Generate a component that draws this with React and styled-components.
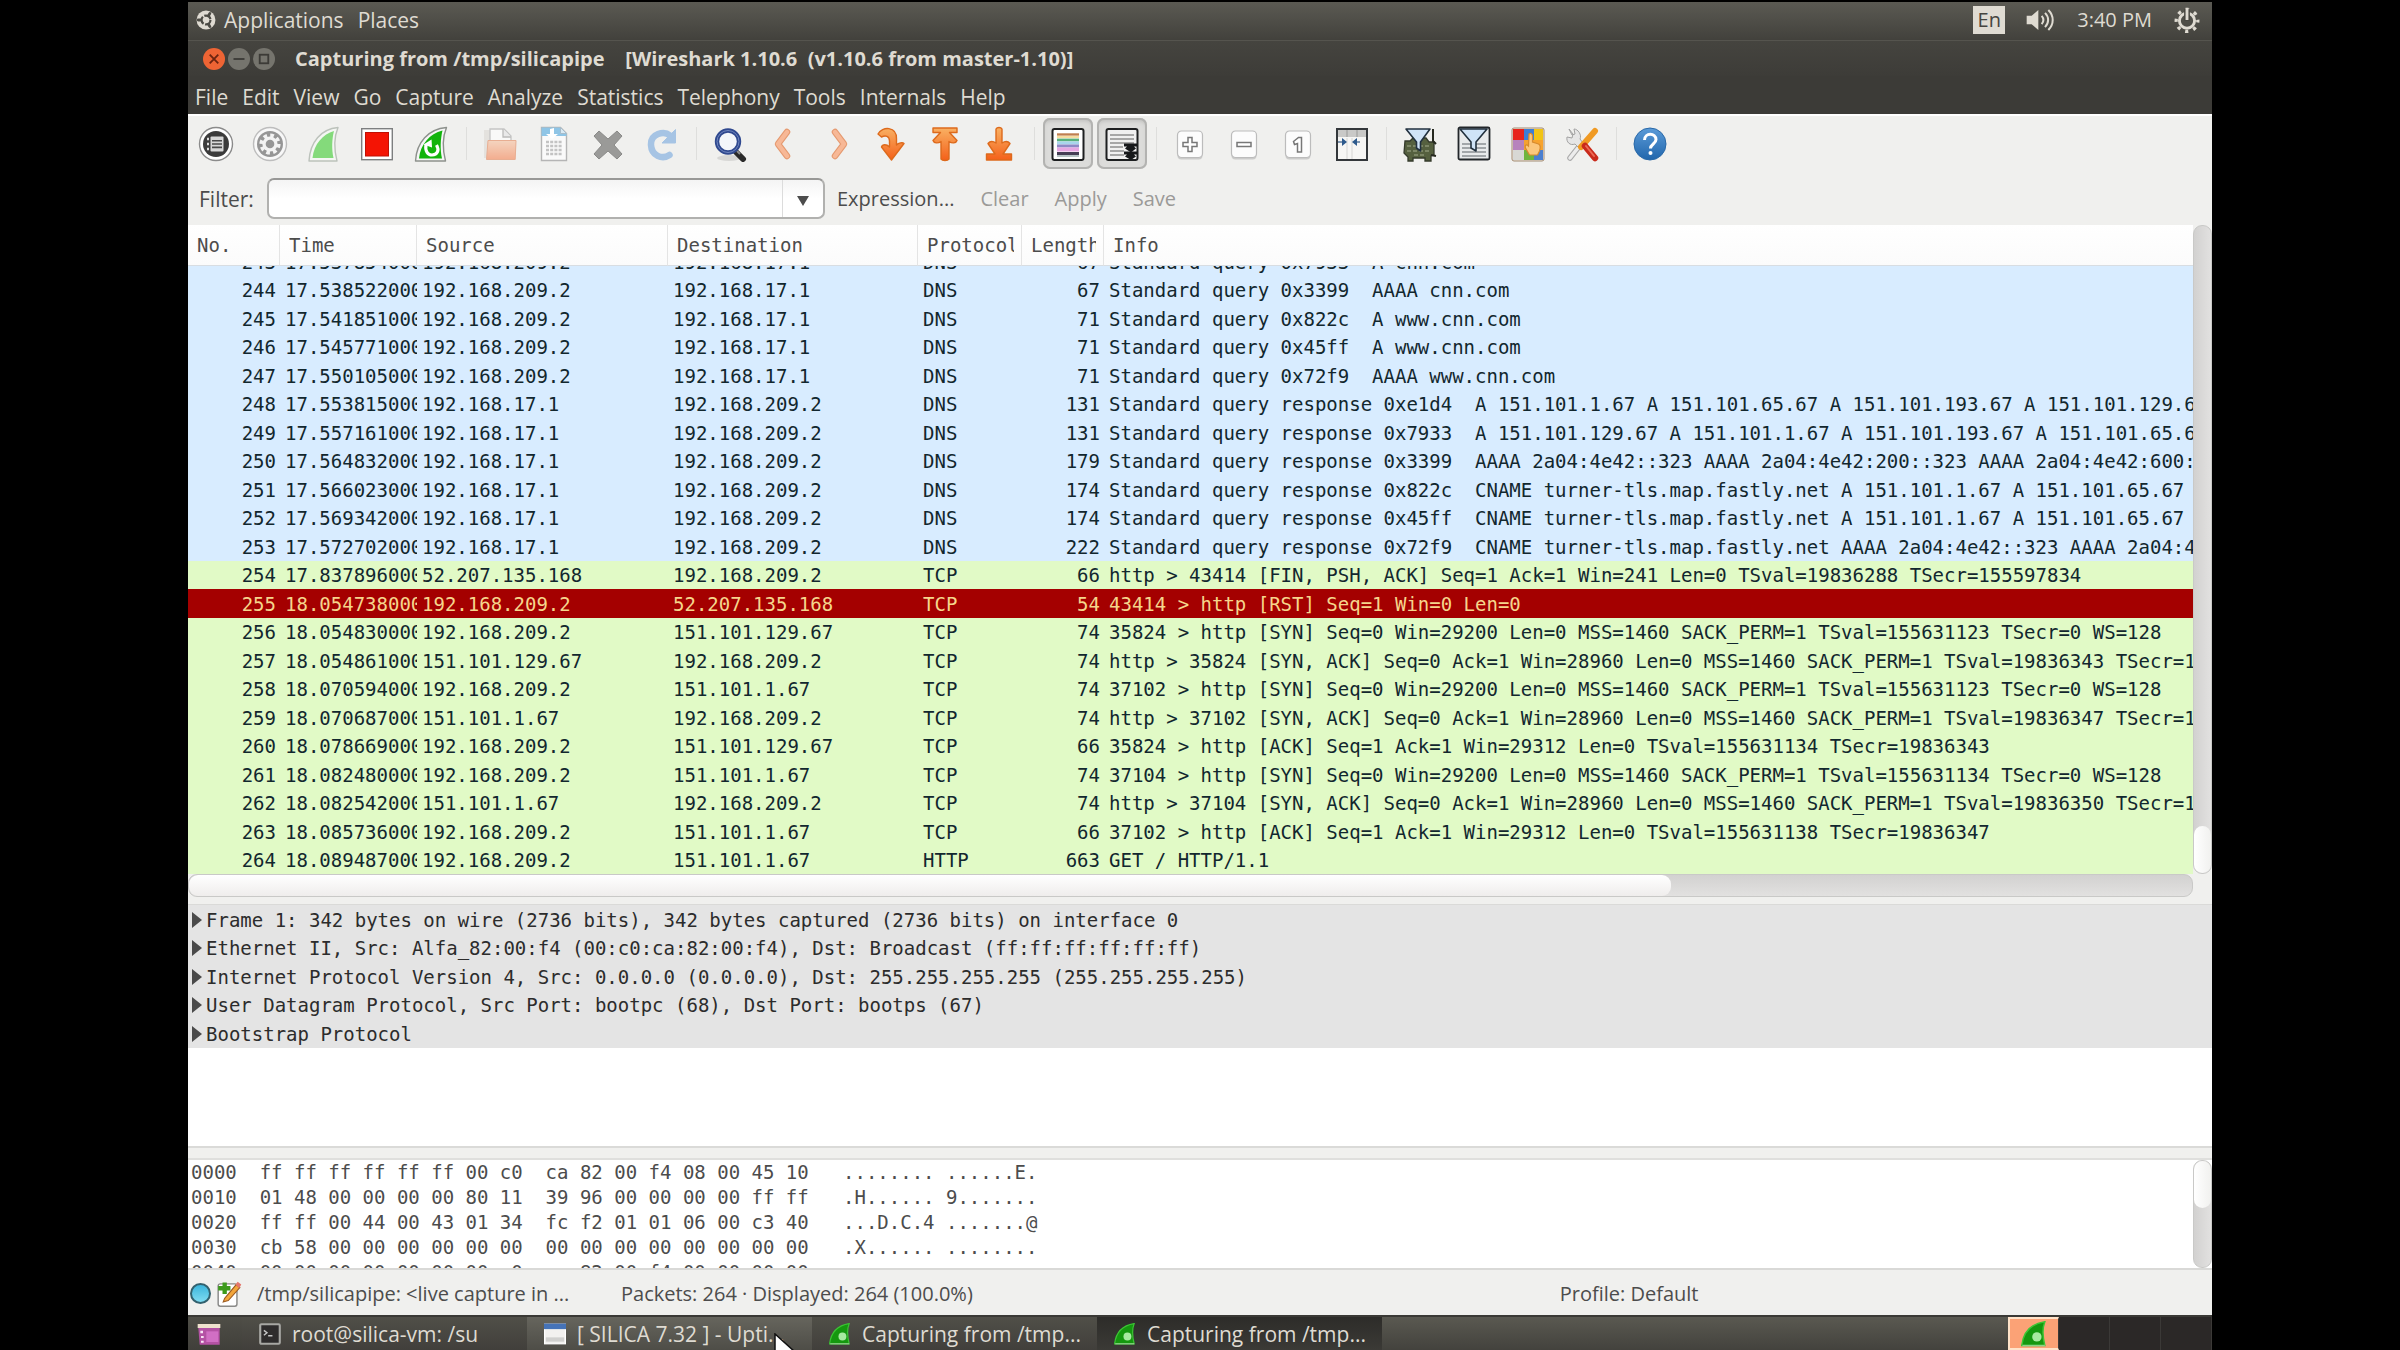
import React from "react";
import styled, { createGlobalStyle } from "styled-components";

const packets = [
  [243, "17.537854000", "192.168.209.2", "192.168.17.1", "DNS", 67, "Standard query 0x7933  A cnn.com"],
  [244, "17.538522000", "192.168.209.2", "192.168.17.1", "DNS", 67, "Standard query 0x3399  AAAA cnn.com"],
  [245, "17.541851000", "192.168.209.2", "192.168.17.1", "DNS", 71, "Standard query 0x822c  A www.cnn.com"],
  [246, "17.545771000", "192.168.209.2", "192.168.17.1", "DNS", 71, "Standard query 0x45ff  A www.cnn.com"],
  [247, "17.550105000", "192.168.209.2", "192.168.17.1", "DNS", 71, "Standard query 0x72f9  AAAA www.cnn.com"],
  [248, "17.553815000", "192.168.17.1", "192.168.209.2", "DNS", 131, "Standard query response 0xe1d4  A 151.101.1.67 A 151.101.65.67 A 151.101.193.67 A 151.101.129.67"],
  [249, "17.557161000", "192.168.17.1", "192.168.209.2", "DNS", 131, "Standard query response 0x7933  A 151.101.129.67 A 151.101.1.67 A 151.101.193.67 A 151.101.65.67"],
  [250, "17.564832000", "192.168.17.1", "192.168.209.2", "DNS", 179, "Standard query response 0x3399  AAAA 2a04:4e42::323 AAAA 2a04:4e42:200::323 AAAA 2a04:4e42:600::323"],
  [251, "17.566023000", "192.168.17.1", "192.168.209.2", "DNS", 174, "Standard query response 0x822c  CNAME turner-tls.map.fastly.net A 151.101.1.67 A 151.101.65.67 A 151.101.129.67"],
  [252, "17.569342000", "192.168.17.1", "192.168.209.2", "DNS", 174, "Standard query response 0x45ff  CNAME turner-tls.map.fastly.net A 151.101.1.67 A 151.101.65.67 A 151.101.129.67"],
  [253, "17.572702000", "192.168.17.1", "192.168.209.2", "DNS", 222, "Standard query response 0x72f9  CNAME turner-tls.map.fastly.net AAAA 2a04:4e42::323 AAAA 2a04:4e42:200::323"],
  [254, "17.837896000", "52.207.135.168", "192.168.209.2", "TCP", 66, "http > 43414 [FIN, PSH, ACK] Seq=1 Ack=1 Win=241 Len=0 TSval=19836288 TSecr=155597834"],
  [255, "18.054738000", "192.168.209.2", "52.207.135.168", "TCP", 54, "43414 > http [RST] Seq=1 Win=0 Len=0", "reset"],
  [256, "18.054830000", "192.168.209.2", "151.101.129.67", "TCP", 74, "35824 > http [SYN] Seq=0 Win=29200 Len=0 MSS=1460 SACK_PERM=1 TSval=155631123 TSecr=0 WS=128"],
  [257, "18.054861000", "151.101.129.67", "192.168.209.2", "TCP", 74, "http > 35824 [SYN, ACK] Seq=0 Ack=1 Win=28960 Len=0 MSS=1460 SACK_PERM=1 TSval=19836343 TSecr=155631123"],
  [258, "18.070594000", "192.168.209.2", "151.101.1.67", "TCP", 74, "37102 > http [SYN] Seq=0 Win=29200 Len=0 MSS=1460 SACK_PERM=1 TSval=155631123 TSecr=0 WS=128"],
  [259, "18.070687000", "151.101.1.67", "192.168.209.2", "TCP", 74, "http > 37102 [SYN, ACK] Seq=0 Ack=1 Win=28960 Len=0 MSS=1460 SACK_PERM=1 TSval=19836347 TSecr=155631123"],
  [260, "18.078669000", "192.168.209.2", "151.101.129.67", "TCP", 66, "35824 > http [ACK] Seq=1 Ack=1 Win=29312 Len=0 TSval=155631134 TSecr=19836343"],
  [261, "18.082480000", "192.168.209.2", "151.101.1.67", "TCP", 74, "37104 > http [SYN] Seq=0 Win=29200 Len=0 MSS=1460 SACK_PERM=1 TSval=155631134 TSecr=0 WS=128"],
  [262, "18.082542000", "151.101.1.67", "192.168.209.2", "TCP", 74, "http > 37104 [SYN, ACK] Seq=0 Ack=1 Win=28960 Len=0 MSS=1460 SACK_PERM=1 TSval=19836350 TSecr=155631134"],
  [263, "18.085736000", "192.168.209.2", "151.101.1.67", "TCP", 66, "37102 > http [ACK] Seq=1 Ack=1 Win=29312 Len=0 TSval=155631138 TSecr=19836347"],
  [264, "18.089487000", "192.168.209.2", "151.101.1.67", "HTTP", 663, "GET / HTTP/1.1"],
];

const details = [
  "Frame 1: 342 bytes on wire (2736 bits), 342 bytes captured (2736 bits) on interface 0",
  "Ethernet II, Src: Alfa_82:00:f4 (00:c0:ca:82:00:f4), Dst: Broadcast (ff:ff:ff:ff:ff:ff)",
  "Internet Protocol Version 4, Src: 0.0.0.0 (0.0.0.0), Dst: 255.255.255.255 (255.255.255.255)",
  "User Datagram Protocol, Src Port: bootpc (68), Dst Port: bootps (67)",
  "Bootstrap Protocol",
];

const hexDump = [
  "0000  ff ff ff ff ff ff 00 c0  ca 82 00 f4 08 00 45 10   ........ ......E.",
  "0010  01 48 00 00 00 00 80 11  39 96 00 00 00 00 ff ff   .H...... 9.......",
  "0020  ff ff 00 44 00 43 01 34  fc f2 01 01 06 00 c3 40   ...D.C.4 .......@",
  "0030  cb 58 00 00 00 00 00 00  00 00 00 00 00 00 00 00   .X...... ........",
  "0040  00 00 00 00 00 00 00 c0  ca 82 00 f4 00 00 00 00   ........ ........",
].join("\n");

const menus = ["File", "Edit", "View", "Go", "Capture", "Analyze", "Statistics", "Telephony", "Tools", "Internals", "Help"];

const rowColors = {
  DNS: "#d8ecff",
  TCP: "#e1fac6",
  HTTP: "#e1fac6",
};

/* ---------- icons ---------- */

const Svg = ({ size = 36, children, ...rest }) => (
  <svg width={size} height={size} viewBox="0 0 36 36" fill="none" aria-hidden="true" {...rest}>
    {children}
  </svg>
);

const InterfacesIcon = () => (
  <Svg>
    <circle cx="18" cy="18" r="16.5" fill="#fff" stroke="#8b8b8b" strokeWidth="1.4" />
    <circle cx="18" cy="18" r="13" fill="#3b3b3b" />
    <path d="M9 13h2M9 18h2M9 23h2" stroke="#ddd" strokeWidth="2.4" />
    <rect x="12.5" y="10.5" width="13" height="15" rx="1" fill="#d8d8d8" />
    <path d="M14 14.8h10M14 18h10M14 21.4h10" stroke="#4a4a4a" strokeWidth="1.6" />
  </Svg>
);

const OptionsIcon = () => (
  <Svg>
    <circle cx="18" cy="18" r="16.5" fill="#f8f8f8" stroke="#bdbdbd" strokeWidth="1.4" />
    <circle cx="18" cy="18" r="13" fill="#969696" />
    <circle cx="18" cy="18" r="8.6" stroke="#f3f3f3" strokeWidth="4" strokeDasharray="3.6 3.15" />
    <circle cx="18" cy="18" r="7.6" fill="#f3f3f3" />
    <circle cx="18" cy="18" r="4.3" fill="#969696" />
  </Svg>
);

const FinIcon = () => (
  <Svg>
    <path d="M3 35C4 16 15 3 32 1.5C28 11 28 23 31 35Z" fill="#f4f6f3" stroke="#bcc2bb" strokeWidth="1.4" strokeLinejoin="round" />
    <path d="M6.5 32C8 18 17 8 28 5C26 13 25.500 23 27.500 32Z" fill="#84da7b" />
  </Svg>
);

const StopIcon = () => (
  <Svg>
    <rect x="1.700" y="2.700" width="30.600" height="31" fill="#fff" stroke="#7d7f80" strokeWidth="1.4" />
    <rect x="5.500" y="6.500" width="23" height="23.500" fill="#f41404" stroke="#c01004" />
  </Svg>
);

const RestartIcon = () => (
  <Svg>
    <path d="M1.500 35C2.500 16 14.500 3 32.500 1.500C28.500 11 28.500 23 31.500 35Z" fill="#f6f6f6" stroke="#8d918c" strokeWidth="1.4" strokeLinejoin="round" />
    <path d="M5 32.500C6.500 18 15.500 8 28.500 4.500C26.500 13 26 23 28 32.500Z" fill="#12b40c" />
    <path d="M12 18.500c-1.200 7 2 10.500 6 10.500c5.500 0 7.500-5 4.500-10" stroke="#fff" strokeWidth="3.200" />
    <path d="M9.500 18.500l8-5l.5 8z" fill="#fff" />
  </Svg>
);

const OpenIcon = () => (
  <Svg opacity="0.6">
    <path d="M2 4h8v28H2z" fill="#ddd9d5" />
    <path d="M8 3h14l7 7v12H8z" fill="#fff" stroke="#aaa" strokeWidth="1.3" />
    <path d="M21 3v8h8" fill="#e6e6e6" stroke="#999" strokeWidth="1.3" />
    <path d="M6 14.500h28l-.8 19H4.500z" fill="url(#folder)" stroke="#e38356" />
    <defs>
      <linearGradient id="folder" x1="0" y1="0" x2="0" y2="1">
        <stop offset="0" stopColor="#f8c3a1" />
        <stop offset="1" stopColor="#f58151" />
      </linearGradient>
    </defs>
  </Svg>
);

const SaveIcon = () => (
  <Svg>
    <path d="M5.500 1.500h19l6 6V34.500h-25z" fill="#fafafa" stroke="#b5b5b5" strokeWidth="1.4" />
    <path d="M5.500 1.500h19l6 6v2.500h-25z" fill="#8fc5e6" />
    <path d="M14 3l4-1v6h4l-6 5l-6-5h4z" fill="#fff" />
    <path d="M24.500 1.500v6h6z" fill="#d9eaf4" stroke="#a8bcc9" />
    <path d="M10 16h16M10 20h16M10 24h16M10 28h16" stroke="#c3c3c3" strokeWidth="2.400" strokeDasharray="3 1.200" />
  </Svg>
);

const CloseFileIcon = () => (
  <Svg>
    <path d="M9 5l9 8l9-8l5 5l-8 9l8 9l-5 5l-9-8l-9 8l-5-5l8-9l-8-9z" fill="#9a9a98" stroke="#8a8a88" strokeLinejoin="round" />
  </Svg>
);

const ReloadIcon = () => (
  <Svg>
    <path d="M26 9.500C20 4.500 6.500 7.500 7 19c.5 10.500 11 15 18.500 10" stroke="#a6c4e4" strokeWidth="6.500" strokeLinecap="round" />
    <path d="M31.500 3.500v13.500H18z" fill="#a6c4e4" stroke="#a6c4e4" strokeLinejoin="round" />
  </Svg>
);

const FindIcon = () => (
  <Svg>
    <ellipse cx="17" cy="32" rx="12" ry="3" fill="#000" opacity=".1" />
    <path d="M24 26l7 7" stroke="#2a2a2a" strokeWidth="6" strokeLinecap="round" />
    <path d="M25 25l3 3" stroke="#8c8c8c" strokeWidth="2" />
    <circle cx="16" cy="15.500" r="11" fill="#f3f6fa" stroke="#30498f" strokeWidth="4.400" />
    <circle cx="16" cy="15.500" r="11" stroke="#6f86bf" strokeWidth="1" />
  </Svg>
);

const ChevronIcon = ({ d }) => (
  <Svg>
    <path d={d} stroke="#e59a70" strokeWidth="6.500" strokeLinecap="round" strokeLinejoin="round" />
    <path d={d} stroke="#f7b896" strokeWidth="4.400" strokeLinecap="round" strokeLinejoin="round" />
  </Svg>
);

const ArrowIcon = ({ d }) => (
  <Svg>
    <path d={d} fill="url(#arrow)" stroke="#dd6a1c" strokeWidth="1.4" strokeLinejoin="round" />
    <defs>
      <linearGradient id="arrow" gradientUnits="userSpaceOnUse" x1="0" y1="2" x2="0" y2="34">
        <stop offset="0" stopColor="#f9b163" />
        <stop offset="1" stopColor="#f4611a" />
      </linearGradient>
    </defs>
  </Svg>
);

const ColorizeIcon = () => (
  <Svg>
    <rect x="2.500" y="3" width="31" height="31" rx="2" fill="#fff" stroke="#1d1f20" strokeWidth="2" />
    <path d="M7 8.500h22" stroke="#c07f50" strokeWidth="2.400" />
    <path d="M7 11h22" stroke="#f6dca0" strokeWidth="2.400" />
    <path d="M7 14h22" stroke="#58b17c" strokeWidth="2.800" />
    <path d="M7 17h22" stroke="#a9d5ec" strokeWidth="3" />
    <path d="M7 20h22" stroke="#8f8ac6" strokeWidth="3" />
    <path d="M7 23.500h22" stroke="#e7a7e2" strokeWidth="4" />
    <path d="M7 27.500h22" stroke="#463f55" strokeWidth="3" />
    <path d="M7 30h22" stroke="#9fb0b2" strokeWidth="1.500" />
  </Svg>
);

const AutoScrollIcon = () => (
  <Svg>
    <rect x="2.500" y="3" width="31" height="31" rx="2" fill="#f0f0f0" stroke="#1d1f20" strokeWidth="2" />
    <path d="M6 9h24M6 13h24M6 17h24M6 21h13M6 25h14M6 29h14" stroke="#a7a7a7" strokeWidth="2.200" />
    <path d="M20 17.500h13v3h-3l2 2l-5 4l-6-4l2-2h-3z" fill="#16181a" />
    <path d="M20 25.500h13v3h-3l2 2l-5 3.500l-6-3.500l2-2h-3z" fill="#16181a" />
  </Svg>
);

const ZoomIcon = ({ children }) => (
  <Svg>
    <rect x="5.500" y="5.500" width="25" height="28" rx="4" fill="#9e9e9e" opacity=".45" />
    <rect x="5.500" y="5" width="25" height="26.500" rx="4" fill="#fcfcfc" stroke="#bcbcbc" strokeWidth="1.200" />
    {children}
  </Svg>
);

const ResizeIcon = () => (
  <Svg>
    <rect x="3" y="3" width="30" height="31" fill="#f6f6f4" stroke="#33373a" strokeWidth="2" />
    <path d="M4 4h28v7H4z" fill="#c9c9c7" />
    <path d="M13 4v7M23 4v7" stroke="#a5a5a3" strokeWidth="1.300" />
    <path d="M13 12v21M18 12v21" stroke="#dededc" strokeWidth="1.300" />
    <path d="M4 16h6M20 16h6" stroke="#5c7a9b" strokeWidth="1.600" />
    <path d="M8 12l5 4l-5 4zM23 12l-5 4l5 4z" fill="#2d5a8c" />
  </Svg>
);

const CaptureFilterIcon = () => (
  <Svg>
    <path d="M3 15h5l3-3h13l3 4h5v13l-3 1v5h-6v-3H11v3H6v-4L2 27z" fill="#55603f" stroke="#343a2b" strokeWidth="1.300" />
    <path d="M5 20h24M5 25h24M12 29h12" stroke="#7c8666" strokeWidth="2" strokeDasharray="4 2" />
    <path d="M31 3v12l3 3M29 29l5 1" stroke="#26291f" strokeWidth="2" />
    <path d="M4 3h24L18.500 16v9l-4-3v-6z" fill="#cfe3f7" stroke="#22313f" strokeWidth="1.600" strokeLinejoin="round" />
  </Svg>
);

const DisplayFilterIcon = () => (
  <Svg>
    <rect x="2.500" y="1.500" width="31" height="32" rx="1.500" fill="#e8eaec" stroke="#22262a" strokeWidth="1.800" />
    <path d="M6 18h24M6 22h24M6 26h24M6 30h24" stroke="#a2a6aa" strokeWidth="2" />
    <path d="M4 3h27L20 16v9l-5-3v-6z" fill="#cfe3f7" stroke="#22313f" strokeWidth="1.600" strokeLinejoin="round" />
  </Svg>
);

const ColorRulesIcon = () => (
  <Svg>
    <rect x="2" y="2" width="32" height="33" rx="2" fill="#f0e7dc" stroke="#a28b72" />
    <path d="M3 3h11v11H3z" fill="#e8251b" />
    <path d="M14 3h10v11H14z" fill="#3c7ed6" />
    <path d="M24 3h9v11h-9z" fill="#f2c414" />
    <path d="M3 14h11v10H3z" fill="#b783bd" />
    <path d="M14 14h10v10H14z" fill="#f4a231" />
    <path d="M24 14h9v10h-9z" fill="#f7a32d" />
    <path d="M3 24h11v10H3z" fill="#d8d8d4" />
    <path d="M14 24h10v10H14z" fill="#70b53d" />
    <path d="M24 24h9v10h-9z" fill="#4a7fd0" />
    <path d="M19 8c2-1.500 3.500 0 3.500 2v6l6 2c2 1 2 4 1 7l-2 4h-8l-4-7c-1-3 1-4 3-2z" fill="#fbc77d" stroke="#d78b2e" strokeWidth="1.200" />
  </Svg>
);

const PreferencesIcon = () => (
  <Svg>
    <path d="M6 32l11-14" stroke="#a9a9a9" strokeWidth="5.500" strokeLinecap="round" />
    <path d="M6 32l11-14" stroke="#ececec" strokeWidth="3.500" strokeLinecap="round" />
    <path d="M5 3l4 5l-1 4l-5-1c-1 5 3 9 8 7l3 3l5-4l-3-4c2-4-2-10-6-10l1 5l-3 1z" fill="#e6e6e6" stroke="#a2a2a2" />
    <path d="M31 5L17 21" stroke="#f09a23" strokeWidth="6" strokeLinecap="round" />
    <path d="M21 20l10 12" stroke="#c92a1b" strokeWidth="6.500" strokeLinecap="round" />
    <path d="M22 20l8 10" stroke="#ee6a55" strokeWidth="2" strokeLinecap="round" />
  </Svg>
);

const HelpIcon = () => (
  <Svg>
    <circle cx="18" cy="18" r="16" fill="url(#help)" stroke="#2a69a8" />
    <path d="M12.500 14c0-7.500 11.500-7.500 11.500-.5c0 4.500-5.500 4.500-5.500 9" stroke="#fff" strokeWidth="3" />
    <circle cx="18.500" cy="27" r="2" fill="#fff" />
    <defs>
      <linearGradient id="help" x1="0" y1="0" x2="0" y2="1">
        <stop offset="0" stopColor="#5b9bd8" />
        <stop offset="1" stopColor="#2166ac" />
      </linearGradient>
    </defs>
  </Svg>
);

const SharkIcon = ({ size = 22 }) => (
  <Svg size={size}>
    <path d="M1 34C3 17 13 4 33 1C29 11 30 22 33 34Z" fill="#15980f" stroke="#3cc535" strokeWidth="2" />
    <circle cx="22" cy="22" r="6.500" fill="#a7eaa0" />
    <path d="M2 34h31" stroke="#8fd08a" strokeWidth="2" />
  </Svg>
);

const TerminalIcon = () => (
  <Svg size={22}>
    <rect x="2" y="2" width="32" height="32" rx="2" fill="#2e2c2c" stroke="#a7a7a3" strokeWidth="3.500" />
    <path d="M8 12l5 4l-5 4M15 21h7" stroke="#c6c6c6" strokeWidth="2.400" />
  </Svg>
);

const WindowIcon = () => (
  <Svg size={22}>
    <rect x="1" y="2" width="34" height="32" fill="#f2f1ef" stroke="#fff" strokeWidth="2" />
    <path d="M0 1h36v9H0z" fill="#4573b8" />
    <path d="M3 27h30" stroke="#d0d0ce" strokeWidth="7" />
  </Svg>
);

const DesktopIcon = () => (
  <Svg size={24}>
    <path d="M2 9h32v25H4z" fill="#b452a4" />
    <path d="M1 3h34v6H1z" fill="#efe1cd" />
    <path d="M14 14h18v16H14z" fill="#d16fc4" />
    <path d="M7 13v4M8 21v3M8 28v3" stroke="#f8e4f5" strokeWidth="4" />
  </Svg>
);

const UbuntuIcon = () => (
  <Svg size={20}>
    <circle cx="18" cy="18" r="17" fill="#dfdbd2" />
    <circle cx="18" cy="18" r="8" stroke="#4b4a44" strokeWidth="4" strokeDasharray="14 2.800" />
    <path d="M4 18h4M25 6l-2 3.500M25 30l-2-3.500" stroke="#4b4a44" strokeWidth="5" strokeLinecap="round" />
  </Svg>
);

const VolumeIcon = () => (
  <Svg size={30}>
    <path d="M2 13h6l8-7v24l-8-7H2z" fill="#dfdbd2" />
    <path d="M20 13c2.500 3 2.500 7 0 10M24 9.500c5 5 5 12 0 17M28 6c7 7 7 17 0 24" stroke="#dfdbd2" strokeWidth="2.400" />
  </Svg>
);

const PowerIcon = () => (
  <Svg size={26}>
    <circle cx="18" cy="19" r="15" stroke="#dfdbd2" strokeWidth="4.500" strokeDasharray="4.500 7.280" strokeDashoffset="2" />
    <circle cx="18" cy="19" r="10.500" stroke="#dfdbd2" strokeWidth="4" />
    <path d="M18 3v16" stroke="#46453f" strokeWidth="8" />
    <path d="M18 1v17" stroke="#dfdbd2" strokeWidth="4" />
  </Svg>
);

const CommentIcon = () => (
  <Svg size={26}>
    <rect x="3" y="4" width="26" height="31" rx="3" fill="#fff" stroke="#8a8a88" strokeWidth="2" />
    <path d="M12 2v16M3 10h17" stroke="#3d9a1c" strokeWidth="6" />
    <path d="M12 24L28 5l5 4L17 27l-7 2z" fill="#f3a63b" stroke="#9c5a20" strokeWidth="1.500" />
    <path d="M27 5l3-4l5 4l-3 5z" fill="#e5766c" />
  </Svg>
);

const toolbarGroups = [
  [
    ["Interfaces", <InterfacesIcon />],
    ["Options", <OptionsIcon />, "off"],
    ["Start", <FinIcon />, "off"],
    ["Stop", <StopIcon />],
    ["Restart", <RestartIcon />],
  ],
  [
    ["Open", <OpenIcon />, "off"],
    ["Save file", <SaveIcon />, "off"],
    ["Close", <CloseFileIcon />, "off"],
    ["Reload", <ReloadIcon />, "off"],
  ],
  [
    ["Find", <FindIcon />],
    ["Back", <ChevronIcon d="M21 6L12 18l9 12" />, "off"],
    ["Forward", <ChevronIcon d="M15 6l9 12l-9 12" />, "off"],
    ["Go to packet", <ArrowIcon d="M4 8C8 0 23 0 22.500 13v6c2-2 6-3 7.500-1.500L17.500 34L7.500 21c1-3 5-3 8 0v-6c0-5-4-6-8-4z" />],
    ["First packet", <ArrowIcon d="M5 2h24v4.500h-7.500l7.500 8c-1 3-5 3-8 1V33c-1.500 2-6.500 2-8 0V15.500c-3 2-7 2-8-1l7.500-8H5z" />],
    ["Last packet", <ArrowIcon d="M14 3c1-2 5-2 6 0v14c3-2 6-2 8 .5L21 28h8.500v6H4.500v-6H13L6 17.500c2-2.500 5-2.500 8-.5z" />],
  ],
  [
    ["Colorize", <ColorizeIcon />, "pressed"],
    ["Auto scroll", <AutoScrollIcon />, "pressed"],
  ],
  [
    [
      "Zoom in",
      <ZoomIcon>
        <path d="M16 11.500h4v5h5v4h-5v5h-4v-5h-5v-4h5z" fill="#fff" stroke="#777" strokeWidth="1.500" />
      </ZoomIcon>,
    ],
    [
      "Zoom out",
      <ZoomIcon>
        <path d="M11 16.500h14v4H11z" fill="#fff" stroke="#777" strokeWidth="1.500" />
      </ZoomIcon>,
    ],
    [
      "Normal size",
      <ZoomIcon>
        <path d="M13.500 15.500l5-4h3V26h-4v-8.500l-3 1z" fill="#fff" stroke="#777" strokeWidth="1.500" />
      </ZoomIcon>,
    ],
    ["Resize columns", <ResizeIcon />],
  ],
  [
    ["Capture filters", <CaptureFilterIcon />],
    ["Display filters", <DisplayFilterIcon />],
    ["Coloring rules", <ColorRulesIcon />],
    ["Preferences", <PreferencesIcon />],
  ],
  [["Help contents", <HelpIcon />]],
];

const tasks = [
  { label: "root@silica-vm: /su", icon: <TerminalIcon /> },
  { label: "[ SILICA 7.32 ] - Upti...", icon: <WindowIcon />, state: "hover" },
  { label: "Capturing from /tmp...", icon: <SharkIcon /> },
  { label: "Capturing from /tmp...", icon: <SharkIcon />, state: "active" },
];

/* ---------- app ---------- */

export default function App() {
  return (
    <Screen>
      <GlobalStyle />

      <TopPanel>
        <PanelButton>
          <UbuntuIcon />
          Applications
        </PanelButton>
        <PanelButton>Places</PanelButton>
        <Tray>
          <KeyboardLayout>En</KeyboardLayout>
          <VolumeIcon />
          <Clock>3:40 PM</Clock>
          <PowerIcon />
        </Tray>
      </TopPanel>

      <TitleBar>
        <WindowButton $close aria-label="Close window">
          <Svg size={22}>
            <path d="M11 11l14 14M25 11L11 25" stroke="#6b2410" strokeWidth="3" />
          </Svg>
        </WindowButton>
        <WindowButton aria-label="Minimize window">
          <Svg size={22}>
            <path d="M9 18h18" stroke="#3c3b37" strokeWidth="3" />
          </Svg>
        </WindowButton>
        <WindowButton aria-label="Maximize window">
          <Svg size={22}>
            <rect x="11" y="11" width="14" height="14" stroke="#3c3b37" strokeWidth="3" />
          </Svg>
        </WindowButton>
        <Title>{"Capturing from /tmp/silicapipe    [Wireshark 1.10.6  (v1.10.6 from master-1.10)]"}</Title>
      </TitleBar>

      <MenuBar>
        {menus.map((menu) => (
          <MenuItem key={menu}>{menu}</MenuItem>
        ))}
      </MenuBar>

      <ToolBar>
        {toolbarGroups.map((group, i) => (
          <React.Fragment key={i}>
            {i > 0 && <ToolSeparator />}
            {group.map(([label, icon, state]) => (
              <ToolButton
                key={label}
                aria-label={label}
                disabled={state === "off"}
                aria-pressed={state === "pressed" ? true : undefined}
                $pressed={state === "pressed"}
              >
                {icon}
              </ToolButton>
            ))}
          </React.Fragment>
        ))}
      </ToolBar>

      <FilterBar>
        <FilterLabel htmlFor="filter">Filter:</FilterLabel>
        <ComboBox>
          <input id="filter" type="text" />
          <button aria-label="Recent filters">
            <svg width="12" height="10" viewBox="0 0 12 10">
              <path d="M0 0h12L6 10z" fill="#4c4c4c" />
            </svg>
          </button>
        </ComboBox>
        <FilterButton>Expression...</FilterButton>
        <FilterButton disabled>Clear</FilterButton>
        <FilterButton disabled>Apply</FilterButton>
        <FilterButton disabled>Save</FilterButton>
      </FilterBar>

      <PacketPane>
        <PacketList>
          <PacketTable>
            <colgroup>
              <Col $w={92} />
              <Col $w={137} />
              <Col $w={251} />
              <Col $w={250} />
              <Col $w={104} />
              <Col $w={82} />
              <Col />
            </colgroup>
            <thead>
              <tr>
                {["No.", "Time", "Source", "Destination", "Protocol", "Length", "Info"].map((name) => (
                  <HeadCell key={name}>
                    <span>{name}</span>
                  </HeadCell>
                ))}
              </tr>
            </thead>
            <tbody>
              {packets.map(([no, time, source, destination, protocol, length, info, flag]) => (
                <PacketRow key={no} $bg={rowColors[protocol]} $reset={flag === "reset"}>
                  <Cell $right>{no}</Cell>
                  <Cell $clip>{time}</Cell>
                  <Cell>{source}</Cell>
                  <Cell>{destination}</Cell>
                  <Cell>{protocol}</Cell>
                  <Cell $right>{length}</Cell>
                  <Cell $clip>{info}</Cell>
                </PacketRow>
              ))}
            </tbody>
          </PacketTable>
        </PacketList>
        <VScroll $end>
          <VThumb />
        </VScroll>
        <HScroll>
          <HThumb />
        </HScroll>
      </PacketPane>

      <DetailPane>
        {details.map((line) => (
          <DetailRow key={line}>
            <svg width="10" height="16" viewBox="0 0 10 16">
              <path d="M0 0l10 8L0 16z" fill="#4a4a4a" />
            </svg>
            {line}
          </DetailRow>
        ))}
      </DetailPane>

      <Splitter />

      <HexPane>
        <HexText>{hexDump}</HexText>
        <VScroll>
          <VThumb />
        </VScroll>
      </HexPane>

      <StatusBar>
        <StatusSection>
          <ExpertDot aria-label="Expert info" />
          <CommentIcon />
          <StatusText>/tmp/silicapipe: &lt;live capture in ...</StatusText>
        </StatusSection>
        <span>Packets: 264 · Displayed: 264 (100.0%)</span>
        <span>Profile: Default</span>
      </StatusBar>

      <TaskBar>
        <ShowDesktop aria-label="Show desktop">
          <DesktopIcon />
        </ShowDesktop>
        {tasks.map(({ label, icon, state }, i) => (
          <Task key={i} $state={state}>
            {icon}
            {label}
            {state === "hover" && (
              <Pointer width="22" height="32" viewBox="0 0 22 32" aria-hidden="true">
                <path d="M1 1v25l6-5l4 10l5-2l-4-10h9z" fill="#fff" stroke="#111" strokeWidth="1.500" />
              </Pointer>
            )}
          </Task>
        ))}
        <Workspaces>
          <Workspace $current aria-label="Workspace 1">
            <SharkIcon size={26} />
          </Workspace>
          <Workspace aria-label="Workspace 2" />
          <Workspace aria-label="Workspace 3" />
          <Workspace aria-label="Workspace 4" />
        </Workspaces>
      </TaskBar>
    </Screen>
  );
}

/* ---------- styles ---------- */

const sans = `"Open Sans", "Noto Sans", sans-serif`;
const mono = `"DejaVu Sans Mono", monospace`;

const GlobalStyle = createGlobalStyle`
  * {
    box-sizing: border-box;
  }
  body {
    margin: 0;
    background: #000;
  }
  button {
    font: inherit;
    color: inherit;
    border: 0;
    padding: 0;
    background: none;
  }
`;

const Screen = styled.div`
  display: flex;
  flex-direction: column;
  height: 100vh;
  overflow: hidden;
  padding: 2px 188px 0;
  font-family: ${sans};
  font-size: 20px;
  line-height: 28px;
  color: #4c4c4c;
`;

const TopPanel = styled.header`
  display: flex;
  flex: none;
  align-items: center;
  gap: 14px;
  height: 38px;
  padding: 0 12px 2px 8px;
  font-size: 21px;
  color: #dfdbd2;
  background: linear-gradient(#5b5a53, #42413c);
`;

const PanelButton = styled.button`
  display: flex;
  align-items: center;
  gap: 8px;
`;

const Tray = styled.div`
  display: flex;
  align-items: center;
  gap: 20px;
  margin-left: auto;
  font-size: 20px;
`;

const KeyboardLayout = styled.button`
  width: 32px;
  height: 28px;
  line-height: 28px;
  background: #dfdbd2;
  color: #46453f;
`;

const Clock = styled.span`
  padding: 0 2px;
`;

const TitleBar = styled.div`
  display: flex;
  flex: none;
  align-items: center;
  gap: 3px;
  height: 36px;
  padding-left: 15px;
  background: linear-gradient(#45443f, #3d3c38);
  border-top: 1px solid #55544e;
`;

const WindowButton = styled.button`
  display: flex;
  width: 22px;
  height: 22px;
  border-radius: 50%;
  background: ${(p) => (p.$close ? "#ee6434" : "#75746d")};
`;

const Title = styled.h1`
  margin: 0 0 0 17px;
  font-size: 20px;
  font-weight: 700;
  line-height: 28px;
  white-space: pre;
  color: #dfdbd2;
`;

const MenuBar = styled.nav`
  display: flex;
  flex: none;
  align-items: center;
  gap: 14px;
  height: 38px;
  padding: 4px 7px 0;
  font-size: 21px;
  color: #dfdbd2;
  background: #3c3b37;
`;

const MenuItem = styled.button`
  white-space: nowrap;
`;

const ToolBar = styled.div`
  display: flex;
  flex: none;
  gap: 4px;
  padding: 2px 3px 0;
  border-top: 2px solid #fff;
  background: #f0f0ee;
`;

const ToolButton = styled.button`
  display: flex;
  flex: none;
  align-items: center;
  justify-content: center;
  width: 50px;
  height: 51px;
  border-radius: 7px;
  ${(p) =>
    p.$pressed &&
    `
    background: #dcdcda;
    box-shadow: inset 0 0 0 2px #b3b3b1, inset 0 3px 4px #bdbdbb;
  `}
`;

const ToolSeparator = styled.div`
  width: 10px;
  margin: 9px 0;
  background: linear-gradient(#dededc, #dededc) center / 1px 100% no-repeat;
`;

const FilterBar = styled.div`
  display: flex;
  flex: none;
  align-items: center;
  gap: 26px;
  padding: 9px 11px 6px;
  background: #f0f0ee;
`;

const FilterLabel = styled.label`
  width: 42px;
  font-size: 21px;
  white-space: nowrap;
`;

const ComboBox = styled.div`
  display: flex;
  flex: 0 1 558px;
  height: 41px;
  margin-right: -14px;
  border: 2px solid #b1b1af;
  border-top-color: #989896;
  border-radius: 7px;
  background: linear-gradient(#f4f4f4, #fff 50%);

  > input {
    flex: 1;
    min-width: 0;
    border: 0;
    padding: 0 8px;
    outline: none;
    font: inherit;
    background: transparent;
  }
  > button {
    width: 41px;
    border-left: 1px solid #dcdcdc;
  }
`;

const FilterButton = styled.button`
  &:disabled {
    color: #9b9a98;
  }
`;

const PacketPane = styled.section`
  display: grid;
  flex: none;
  grid-template-columns: 1fr 19px;
  grid-template-rows: 649px 23px;
  padding-bottom: 7px;
  background: #f0f0ee;
`;

const PacketList = styled.div`
  display: flex;
  flex-direction: column;
  justify-content: flex-end;
  overflow: hidden;
`;

const PacketTable = styled.table`
  flex: none;
  width: 100%;
  table-layout: fixed;
  border-spacing: 0;
  font-family: ${mono};
  font-size: 19px;
  line-height: 28px;
`;

const Col = styled.col`
  width: ${(p) => (p.$w ? `${p.$w}px` : "auto")};
`;

const HeadCell = styled.th`
  position: sticky;
  top: 0;
  height: 41px;
  padding: 0 7px 0 9px;
  font-weight: normal;
  text-align: left;
  background: linear-gradient(#fff, #fbfbfb);
  border-right: 1px solid #e4e4e4;
  border-bottom: 1px solid #d8dde2;

  > span {
    display: block;
    overflow: hidden;
  }
  &:last-child {
    border-right: 0;
  }
`;

const PacketRow = styled.tr`
  height: 28px;
  color: ${(p) => (p.$reset ? "#f6d58c" : "#12272e")};
  background: ${(p) => (p.$reset ? "#a40000" : p.$bg)};

  &:nth-child(odd) {
    height: 29px;
  }
`;

const Cell = styled.td`
  padding: 0 ${(p) => (p.$clip ? 0 : 4)}px 0 5px;
  overflow: hidden;
  white-space: pre;
  text-align: ${(p) => (p.$right ? "right" : "left")};
`;

const VScroll = styled.div`
  display: flex;
  flex-direction: column;
  flex: none;
  justify-content: ${(p) => (p.$end ? "flex-end" : "flex-start")};
  width: 19px;
  border: 1px solid #c9c9c7;
  border-radius: 9px;
  background: linear-gradient(90deg, #d2d1d0, #e2e1e0);
`;

const VThumb = styled.div`
  height: 47px;
  border-radius: 9px;
  background: linear-gradient(90deg, #fff, #f1f1ef);
`;

const HScroll = styled.div`
  border: 1px solid #c9c9c7;
  border-radius: 9px;
  background: linear-gradient(#d2d1d0, #e2e1e0);
`;

const HThumb = styled.div`
  width: 74%;
  height: 100%;
  border-radius: 9px;
  background: linear-gradient(#fff, #efedec);
`;

const DetailPane = styled.section`
  flex: 1;
  min-height: 0;
  overflow: hidden;
  border-top: 1px solid #dadad8;
  border-bottom: 2px solid #dadad8;
  background: #fff;
`;

const DetailRow = styled.div`
  display: flex;
  align-items: center;
  gap: 4px;
  height: 29px;
  padding-left: 4px;
  font-family: ${mono};
  font-size: 19px;
  white-space: pre;
  color: #2c2c2c;
  background: #e4e4e4;

  &:nth-child(even) {
    height: 28px;
  }
`;

const Splitter = styled.div`
  flex: none;
  height: 10px;
  background: #f0f0ee;
`;

const HexPane = styled.section`
  display: flex;
  flex: none;
  height: 112px;
  border-top: 2px solid #dfdfdd;
  border-bottom: 2px solid #d9d9d7;
  background: #fff;
`;

const HexText = styled.pre`
  flex: 1;
  margin: 0;
  padding-left: 3px;
  overflow: hidden;
  font-family: ${mono};
  font-size: 19px;
  line-height: 25px;
`;

const StatusBar = styled.footer`
  display: grid;
  flex: none;
  grid-template-columns: 433px 59fr 41fr;
  align-items: center;
  height: 45px;
  padding-top: 2px;
  background: #f0f0ee;
`;

const StatusSection = styled.div`
  display: flex;
  align-items: center;
  gap: 5px;
  padding-left: 2px;
`;

const StatusText = styled.span`
  padding-left: 10px;
`;

const ExpertDot = styled.button`
  width: 21px;
  height: 21px;
  border: 2px solid #33616e;
  border-radius: 50%;
  background: linear-gradient(#3bb5dc, #7fdcf2);
`;

const TaskBar = styled.div`
  display: flex;
  flex: none;
  height: 35px;
  font-size: 21px;
  color: #dfdbd2;
  background: linear-gradient(#5a5951, #43423d);
  border-top: 2px solid #3a3935;
`;

const ShowDesktop = styled.button`
  display: flex;
  align-items: center;
  width: 54px;
  padding-left: 9px;
  background: linear-gradient(#4f4e47, #403f3a);
`;

const taskColors = {
  hover: "linear-gradient(#66655d, #4e4d47)",
  active: "linear-gradient(#2d2c29, #3b3a36)",
};

const Task = styled.button`
  position: relative;
  display: flex;
  align-items: center;
  gap: 11px;
  width: 285px;
  padding-left: 17px;
  white-space: nowrap;
  background: ${(p) => taskColors[p.$state] || "linear-gradient(#504f48, #413f3b)"};
`;

const Pointer = styled.svg`
  position: absolute;
  top: 16px;
  right: 16px;
  z-index: 1;
`;

const Workspaces = styled.div`
  display: flex;
  margin-left: auto;
`;

const Workspace = styled.button`
  display: flex;
  align-items: center;
  justify-content: center;
  width: 51px;
  border: ${(p) => (p.$current ? "2px solid #ffe3c9" : "0")};
  border-right: 1px solid #3b3937;
  background: ${(p) => (p.$current ? "#fba276" : "#2b2827")};
`;
